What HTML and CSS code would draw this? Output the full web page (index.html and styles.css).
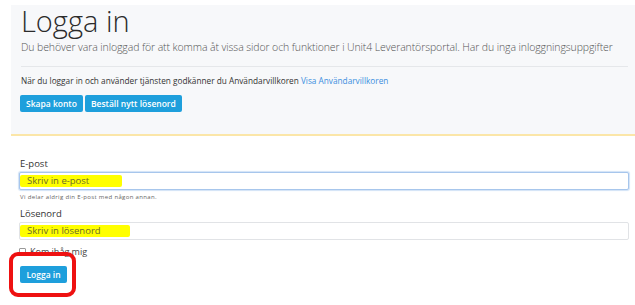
FILE: index.html
```html
<!DOCTYPE html>
<html lang="sv">
<head>
<meta charset="utf-8">
<title>Logga in</title>
<link rel="stylesheet" href="styles.css">
</head>
<body>
<div class="jumbotron">
  <h1 class="title">Logga in</h1>
  <p class="lead">Du behöver vara inloggad för att komma åt vissa sidor och funktioner i Unit4 Leverantörsportal. Har du inga inloggningsuppgifter</p>
  <hr class="divider">
  <p class="terms">När du loggar in och använder tjänsten godkänner du Användarvillkoren <a href="#" class="link">Visa Användarvillkoren</a></p>
  <div class="btn-row">
    <button class="btn">Skapa konto</button>
    <button class="btn">Beställ nytt lösenord</button>
  </div>
</div>
<form class="login">
  <label class="label">E-post</label>
  <div class="input input-focus"><span class="mark mark-email">Skriv in e-post</span></div>
  <div class="help">Vi delar aldrig din E-post med någon annan.</div>
  <label class="label label-pw">Lösenord</label>
  <div class="input"><span class="mark mark-pw">Skriv in lösenord</span></div>
  <div class="check-row"><span class="checkbox"></span><span class="check-label">Kom ihåg mig</span></div>
  <div class="submit-wrap">
    <button class="btn btn-submit" type="button">Logga in</button>
    <span class="annotation"></span>
  </div>
</form>
</body>
</html>
```
FILE: styles.css
```css
html, body {
  margin: 0;
  padding: 0;
  background: #ffffff;
  font-family: "Open Sans", "DejaVu Sans", sans-serif;
  color: #333;
}
body {
  min-height: 305px;
}
.jumbotron {
  margin: 5px 0 0 11px;
  padding: 1px 7px 0 10px;
  background: #f7f8fa;
  border-bottom: 2px solid #fbe6a8;
  height: 128px;
}
.title {
  margin: 0;
  font-size: 29px;
  line-height: 30px;
  font-weight: 300;
  color: #2b2b2b;
}
.lead {
  margin: 4px 0 0 0;
  font-size: 10.5px;
  line-height: 14px;
  font-weight: 300;
  color: #555;
  letter-spacing: -0.1px;
  white-space: nowrap;
}
.divider {
  margin: 12px 0 0 0;
  border: 0;
  border-top: 1px solid #e5e7ea;
  height: 0;
}
.terms {
  margin: 8px 0 0 0;
  font-size: 8.25px;
  line-height: 12px;
  color: #333;
}
.link {
  color: #3c8fe0;
  text-decoration: none;
}
.btn-row {
  display: flex;
  gap: 2px;
  margin-top: 8px;
  margin-left: -1px;
}
.btn {
  font-family: "Open Sans", sans-serif;
  background: #1e9fdc;
  color: #fff;
  border: 0;
  border-radius: 2px;
  height: 17px;
  padding: 0 6px;
  font-size: 8.5px;
  font-weight: 600;
  line-height: 17px;
}
.login {
  padding: 22px 6px 0 19px;
  display: flex;
  flex-direction: column;
}
.label {
  font-size: 9.5px;
  line-height: 12px;
  color: #333;
  margin-left: 1px;
}
.input {
  margin-top: 2px;
  height: 16px;
  border: 1px solid #e1e3e6;
  border-radius: 2px;
  background: #fff;
  display: flex;
  align-items: center;
}
.input-focus {
  border-color: #a7c6ec;
  box-shadow: 0 0 1px 1px #d2e3f7;
}
.mark {
  background: #ffff00;
  color: #6b6b2a;
  font-size: 9.5px;
  line-height: 12px;
  padding: 0 0 0 7px;
  border-radius: 2px;
}
.mark-email { width: 95px; }
.mark-pw { width: 103px; }
.help {
  font-size: 6px;
  line-height: 8px;
  color: #666;
  margin: 3px 0 0 1px;
  letter-spacing: 0.35px;
}
.label-pw { margin-top: 7px; }
.check-row {
  display: flex;
  align-items: center;
  gap: 4px;
  margin-top: 5px;
  height: 12px;
}
.checkbox {
  width: 5px;
  height: 5px;
  border: 1px solid #999;
  border-radius: 1px;
}
.check-label {
  font-size: 9px;
  color: #444;
}
.submit-wrap {
  position: relative;
  margin-top: 9px;
  align-self: flex-start;
  margin-left: 1px;
}
.btn-submit {
  width: 47px;
  padding: 0;
  display: block;
}
.annotation {
  position: absolute;
  left: -11px;
  top: -14px;
  width: 59px;
  height: 37px;
  border: 4px solid #ee1111;
  border-radius: 9px;
}
```
